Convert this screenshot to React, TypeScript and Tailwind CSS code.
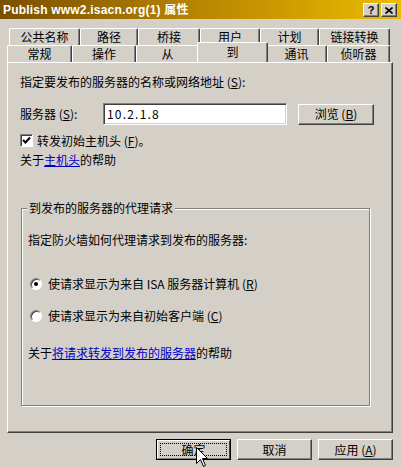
import React from "react";

const raised =
  "border border-t-white border-l-white border-r-[#404040] border-b-[#404040] shadow-[inset_-1px_-1px_0_#808080] bg-[#d4d0c8]";

function Tab({ label, w, selected }: { label: string; w: number; selected?: boolean }) {
  return (
    <div
      style={{ width: w }}
      className={
        selected
          ? "relative z-10 -mx-[2px] -mt-[3px] h-[20px] flex items-start justify-center pt-[3px] bg-[#d4d0c8] border-l border-t border-white border-r border-r-[#404040] shadow-[inset_-1px_0_0_#808080] rounded-t-[2px]"
          : "h-[17px] flex items-center justify-center bg-[#d4d0c8] border-l border-t border-white border-r border-r-[#404040] shadow-[inset_-1px_0_0_#808080] rounded-t-[2px]"
      }
    >
      <span className="leading-[12px]">{label}</span>
    </div>
  );
}

function Button({ children, w, isDefault }: { children: React.ReactNode; w: number; isDefault?: boolean }) {
  if (isDefault) {
    return (
      <div style={{ width: w }} className="h-[21px] border border-black">
        <div className="h-full border border-t-white border-l-white border-r-[#404040] border-b-[#808080] bg-[#d4d0c8] p-[2px]">
          <div className="h-full border border-dotted border-black flex items-center justify-center">{children}</div>
        </div>
      </div>
    );
  }
  return (
    <div style={{ width: w }} className={`h-[21px] flex items-center justify-center ${raised}`}>
      {children}
    </div>
  );
}

function Radio({ checked }: { checked?: boolean }) {
  return (
    <div className="w-[12px] h-[12px] rounded-full bg-white border border-t-[#808080] border-l-[#808080] border-r-white border-b-white shadow-[inset_1px_1px_0_#404040] flex items-center justify-center">
      {checked && <div className="w-[4px] h-[4px] rounded-full bg-black" />}
    </div>
  );
}

export default function App() {
  return (
    <div className="relative w-[401px] h-[467px] overflow-hidden bg-[#d4d0c8] text-[12px] leading-[14px] text-black font-['Noto_Sans_CJK_SC',sans-serif]">
      {/* title bar */}
      <div className="h-[19px] flex items-center justify-between pl-[3px] pr-[4px] bg-linear-to-r from-[#7a4f00] via-[#b88600] to-[#ecbc00]">
        <span className="text-white font-bold text-[12px] font-['Liberation_Sans','Noto_Sans_CJK_SC',sans-serif] tracking-[0.2px]">
          Publish www2.isacn.org(1) 属性
        </span>
        <div className="flex gap-[2px] mt-[1px]">
          <div className={`w-[16px] h-[14px] flex items-center justify-center text-[11px] font-bold leading-none font-['Liberation_Sans',sans-serif] ${raised}`}>?</div>
          <div className={`w-[16px] h-[14px] flex items-center justify-center ${raised}`}>
            <svg width="8" height="7" viewBox="0 0 8 7">
              <path d="M0.5 0.5 L7.5 6.5 M7.5 0.5 L0.5 6.5" stroke="black" strokeWidth="1.6" />
            </svg>
          </div>
        </div>
      </div>

      {/* tabs */}
      <div className="mt-[9px] ml-[9px] flex">
        <Tab label="公共名称" w={71} />
        <Tab label="路径" w={58} />
        <Tab label="桥接" w={62} />
        <Tab label="用户" w={60} />
        <Tab label="计划" w={59} />
        <Tab label="链接转换" w={71} />
      </div>
      <div className="ml-[7px] flex relative z-10">
        <Tab label="常规" w={65} />
        <Tab label="操作" w={64} />
        <Tab label="从" w={63} />
        <Tab label="到" w={71} selected />
        <Tab label="通讯" w={61} />
        <Tab label="侦听器" w={63} />
      </div>

      {/* panel */}
      <div className="ml-[7px] w-[386px] h-[371px] border-l border-t border-white border-r border-r-[#404040] border-b border-b-[#404040] shadow-[inset_-1px_-1px_0_#808080] pl-[12px] pt-[12px] flex flex-col">
        <div className="h-[14px]">
          指定要发布的服务器的名称或网络地址 (<u>S</u>):
        </div>
        <div className="mt-[14px] h-[22px] flex items-center">
          <span className="w-[83px]">
            服务器 (<u>S</u>):
          </span>
          <div className="w-[184px] h-[22px] bg-white border border-t-[#808080] border-l-[#808080] border-r-white border-b-white shadow-[inset_1px_1px_0_#404040,inset_-1px_-1px_0_#d4d0c8] flex items-center pl-[3px] tracking-[1.2px]">
            10.2.1.8
          </div>
          <div className="ml-[11px]">
            <Button w={76}>
              浏览 (<u>B</u>)
            </Button>
          </div>
        </div>
        <div className="mt-[9px] h-[13px] flex items-center gap-[4px]">
          <div className="w-[13px] h-[13px] bg-white border border-t-[#808080] border-l-[#808080] border-r-white border-b-white shadow-[inset_1px_1px_0_#404040] flex items-center justify-center">
            <svg width="9" height="9" viewBox="0 0 9 9">
              <path d="M1 4 L3.5 6.5 L8 1.5" stroke="black" strokeWidth="2" fill="none" />
            </svg>
          </div>
          <span>
            转发初始主机头 (<u>F</u>)。
          </span>
        </div>
        <div className="mt-[6px] h-[14px]">
          关于<span className="text-[#0000c8] underline">主机头</span>的帮助
        </div>

        {/* group box */}
        <div className="relative mt-[41px] ml-[1px] w-[349px] h-[198px] border border-[#808080] shadow-[inset_1px_1px_0_#fff,1px_1px_0_#fff] pl-[6px] pt-[24px] flex flex-col">
          <span className="absolute -top-[8px] left-[5px] px-[2px] bg-[#d4d0c8]">到发布的服务器的代理请求</span>
          <div className="h-[14px]">指定防火墙如何代理请求到发布的服务器:</div>
          <div className="mt-[30px] h-[14px] flex items-center gap-[6px] ml-[2px]">
            <Radio checked />
            <span>
              使请求显示为来自 ISA 服务器计算机 (<u>R</u>)
            </span>
          </div>
          <div className="mt-[18px] h-[14px] flex items-center gap-[6px] ml-[2px]">
            <Radio />
            <span>
              使请求显示为来自初始客户端 (<u>C</u>)
            </span>
          </div>
          <div className="mt-[23px] h-[14px]">
            关于<span className="text-[#0000c8] underline">将请求转发到发布的服务器</span>的帮助
          </div>
        </div>
      </div>

      {/* buttons */}
      <div className="mt-[6px] ml-[156px] flex gap-[6px]">
        <Button w={75} isDefault>
          确定
        </Button>
        <Button w={75}>取消</Button>
        <Button w={75}>
          应用 (<u>A</u>)
        </Button>
      </div>

      {/* mouse pointer */}
      <svg className="absolute left-[196px] top-[447px]" width="13" height="21" viewBox="0 0 13 21">
        <path d="M0.5 0.5 L0.5 16.5 L4.5 12.5 L7.5 19.5 L9.5 18.5 L6.5 11.5 L11.5 11.5 Z" fill="white" stroke="black" strokeWidth="1" />
      </svg>
    </div>
  );
}
